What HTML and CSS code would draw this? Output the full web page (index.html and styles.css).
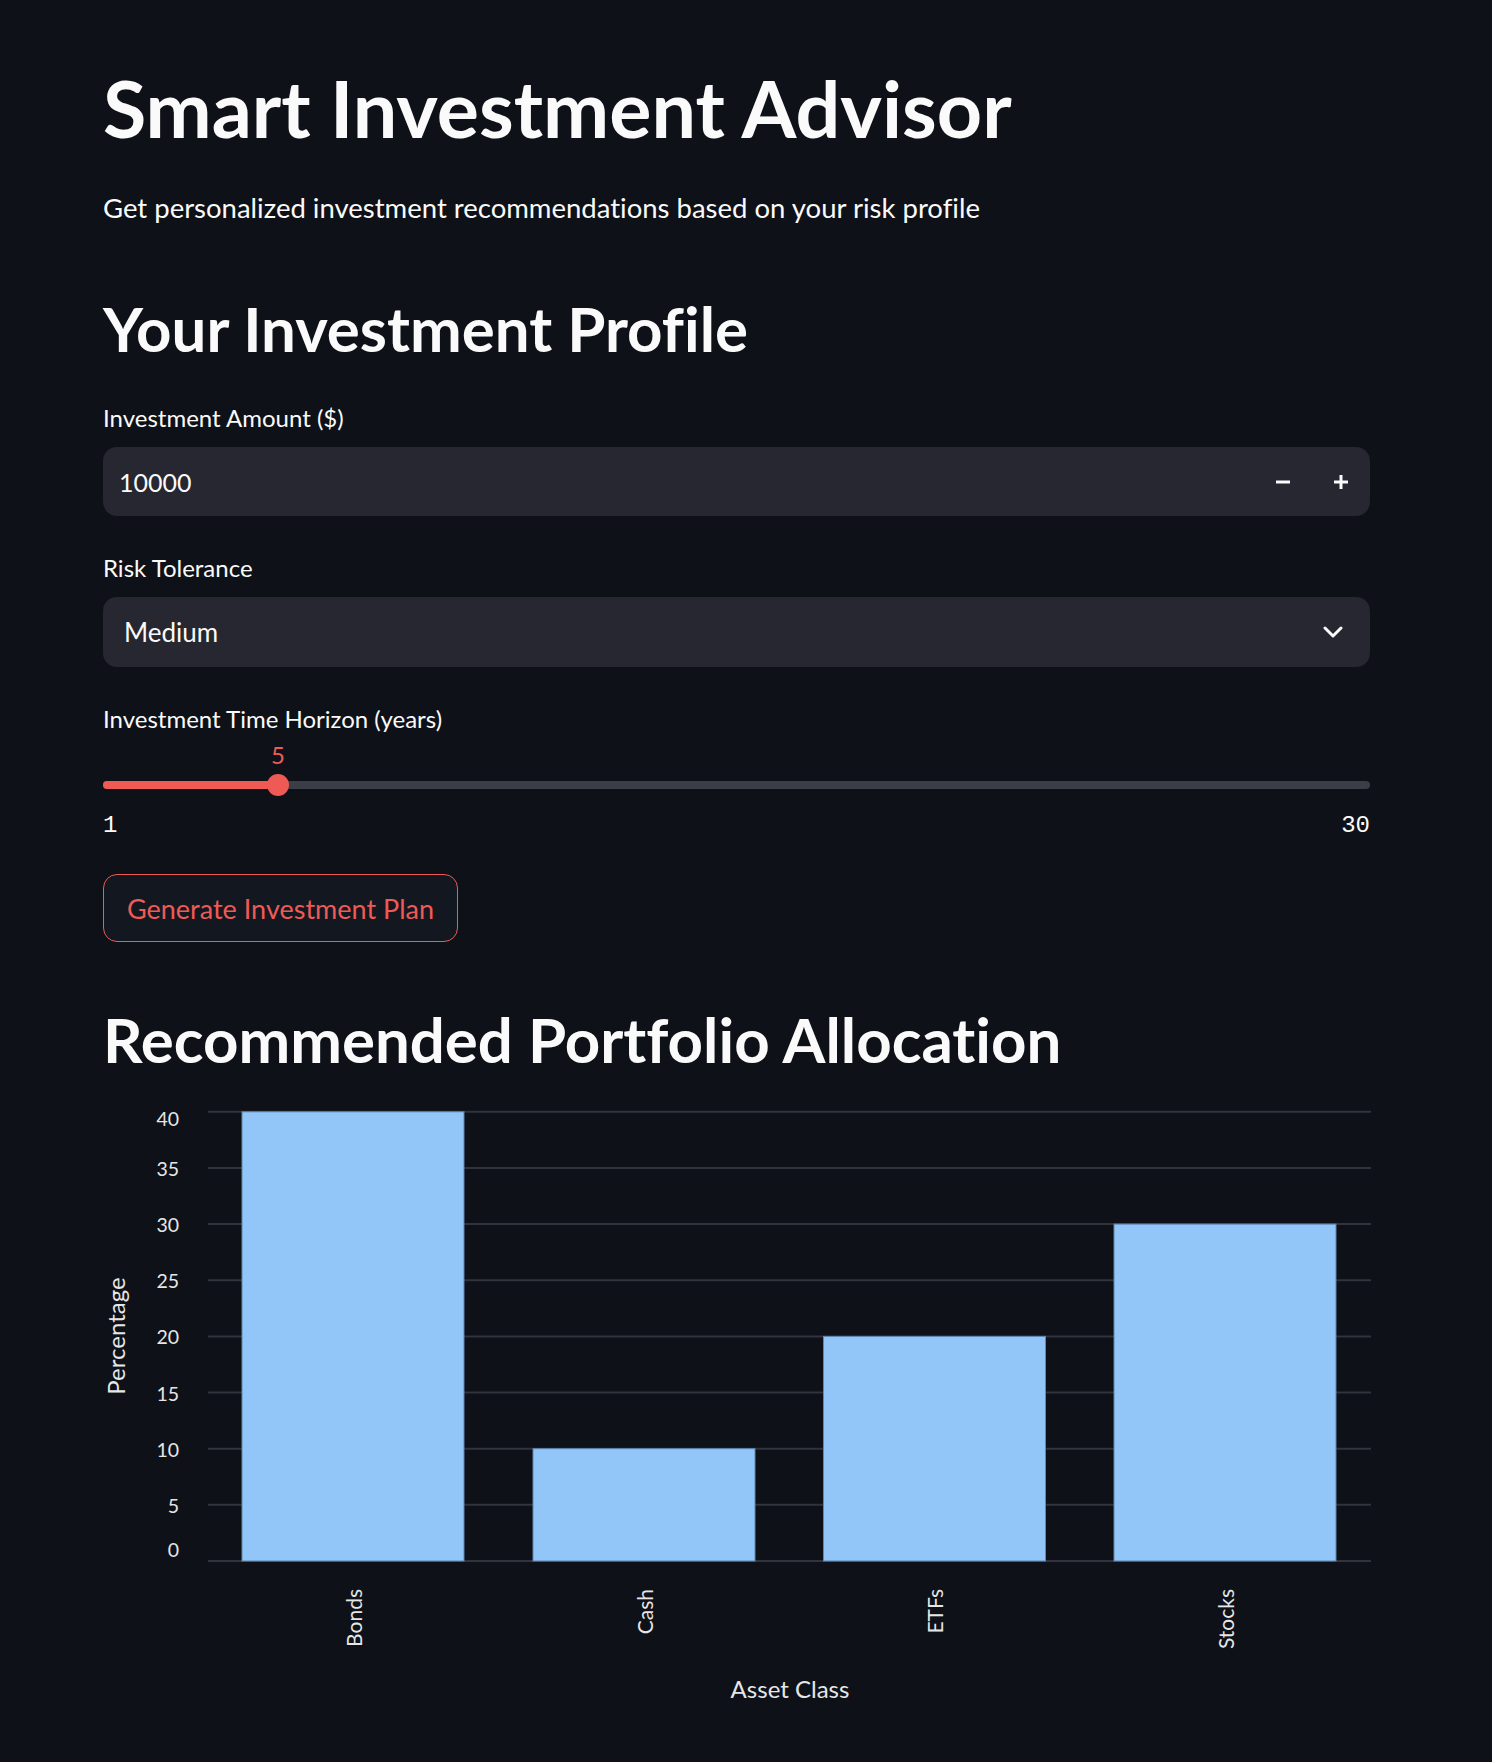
FILE: index.html
```html
<!DOCTYPE html>
<html lang="en">
<head>
<meta charset="utf-8">
<title>Smart Investment Advisor</title>
<link rel="stylesheet" href="styles.css">
</head>
<body>
<div class="main">
  <h1 class="title">Smart Investment Advisor</h1>
  <p class="lead">Get personalized investment recommendations based on your risk profile</p>

  <h2 class="section">Your Investment Profile</h2>

  <div class="field">
    <label class="label">Investment Amount ($)</label>
    <div class="box number">
      <span class="value num-value">10000</span>
      <div class="steps">
        <span class="step">
          <svg width="16" height="16" viewBox="0 0 16 16"><rect x="1" y="6.5" width="14" height="3" fill="#fafafa"/></svg>
        </span>
        <span class="step">
          <svg width="16" height="16" viewBox="0 0 16 16"><rect x="1" y="6.5" width="14" height="3" fill="#fafafa"/><rect x="6.5" y="1" width="3" height="14" fill="#fafafa"/></svg>
        </span>
      </div>
    </div>
  </div>

  <div class="field">
    <label class="label">Risk Tolerance</label>
    <div class="box select">
      <span class="value sel-value">Medium</span>
      <svg class="chev" width="20" height="12" viewBox="0 0 20 12"><polyline points="2,2 10,10 18,2" fill="none" stroke="#fafafa" stroke-width="3" stroke-linecap="round" stroke-linejoin="round"/></svg>
    </div>
  </div>

  <div class="field">
    <label class="label">Investment Time Horizon (years)</label>
    <div class="rail">
      <div class="track"></div>
      <div class="fill"></div>
      <div class="thumb"><span class="thumb-value">5</span></div>
    </div>
    <div class="ticks"><span>1</span><span>30</span></div>
  </div>

  <button class="btn">Generate Investment Plan</button>

  <h2 class="section section2">Recommended Portfolio Allocation</h2>

  <svg class="chart" width="1310" height="630" viewBox="0 0 1310 630">
    <g transform="translate(20 0)">
      <g class="grid">
        <line x1="105" x2="1268" y1="20.8" y2="20.8"/>
        <line x1="105" x2="1268" y1="76.95" y2="76.95"/>
        <line x1="105" x2="1268" y1="133.1" y2="133.1"/>
        <line x1="105" x2="1268" y1="189.25" y2="189.25"/>
        <line x1="105" x2="1268" y1="245.4" y2="245.4"/>
        <line x1="105" x2="1268" y1="301.55" y2="301.55"/>
        <line x1="105" x2="1268" y1="357.7" y2="357.7"/>
        <line x1="105" x2="1268" y1="413.85" y2="413.85"/>
        <line x1="105" x2="1268" y1="470" y2="470"/>
      </g>
      <g class="bars">
        <rect x="139" y="20.8" width="222" height="449.2"/>
        <rect x="430" y="357.7" width="222" height="112.3"/>
        <rect x="720.5" y="245.4" width="222" height="224.6"/>
        <rect x="1011" y="133.1" width="222" height="336.9"/>
      </g>
      <g class="ytick">
        <text x="76" y="35">40</text>
        <text x="76" y="85">35</text>
        <text x="76" y="141.1">30</text>
        <text x="76" y="197.3">25</text>
        <text x="76" y="253.4">20</text>
        <text x="76" y="309.5">15</text>
        <text x="76" y="365.7">10</text>
        <text x="76" y="421.9">5</text>
        <text x="76" y="466">0</text>
      </g>
      <g class="xtick">
        <text x="250.4" y="498" transform="rotate(-90 250.4 498)">Bonds</text>
        <text x="541.1" y="498" transform="rotate(-90 541.1 498)">Cash</text>
        <text x="831.9" y="498" transform="rotate(-90 831.9 498)">ETFs</text>
        <text x="1122.6" y="498" transform="rotate(-90 1122.6 498)">Stocks</text>
      </g>
      <text class="axis-title" x="12" y="245" transform="rotate(-90 12 245)">Percentage</text>
      <text class="axis-title" x="687" y="597">Asset Class</text>
    </g>
  </svg>
</div>
</body>
</html>
```
FILE: styles.css
```css
html, body {
  margin: 0;
  padding: 0;
  background: #0e1117;
}
body {
  color: #fafafa;
  font-family: Lato, "Open Sans", sans-serif;
  font-variant-ligatures: none;
  width: 1492px;
  min-height: 1762px;
}
.main {
  width: 1267px;
  padding: 60px 0 40px 103px;
}
.title {
  margin: 0;
  font-size: 79px;
  line-height: 95px;
  font-weight: 700;
}
.lead {
  margin: 33px 0 0;
  font-size: 27.5px;
  line-height: 40px;
}
.section {
  margin: 63px 0 0;
  font-size: 61.8px;
  line-height: 74px;
  font-weight: 700;
}
.section2 {
  margin-top: 60px;
}
.field {
  display: flex;
  flex-direction: column;
}
.label {
  display: block;
  margin-top: 35px;
  font-size: 24px;
  line-height: 36px;
}
.field + .field .label {
  margin-top: 34px;
}
.box {
  margin-top: 11px;
  background: #262730;
  border-radius: 14px;
  display: flex;
  align-items: center;
  box-sizing: border-box;
}
.number {
  height: 69px;
  padding-left: 16px;
}
.num-value {
  font-size: 25px;
  flex: 1;
}
.steps {
  display: flex;
}
.step {
  width: 58px;
  height: 69px;
  display: flex;
  align-items: center;
  justify-content: center;
}
.select {
  height: 70px;
  padding: 0 27px 0 21px;
}
.sel-value {
  font-size: 26px;
  flex: 1;
}
.rail {
  position: relative;
  height: 22px;
  margin-top: 37px;
}
.track {
  position: absolute;
  left: 0;
  right: 0;
  top: 7px;
  height: 8px;
  border-radius: 4px;
  background: #3b3e46;
}
.fill {
  position: absolute;
  left: 0;
  top: 7px;
  height: 8px;
  width: 175px;
  border-radius: 4px;
  background: #ef5a55;
}
.thumb {
  position: absolute;
  left: 164px;
  top: 0;
  width: 22px;
  height: 22px;
  border-radius: 50%;
  background: #ef5a55;
}
.thumb-value {
  position: absolute;
  bottom: calc(100% + 4px);
  left: 50%;
  transform: translateX(-50%);
  font-size: 24px;
  line-height: 30px;
  color: #ef5a55;
}
.ticks {
  display: flex;
  justify-content: space-between;
  height: 60px;
  line-height: 60px;
  font-family: "Liberation Mono", "DejaVu Sans Mono", monospace;
  font-size: 24px;
}
.btn {
  margin-top: 18px;
  width: 355px;
  height: 68px;
  border: 1px solid #ef5a55;
  border-radius: 14px;
  background: #131720;
  color: #ef5a55;
  font-family: Lato, "Open Sans", sans-serif;
  font-variant-ligatures: none;
  font-size: 27px;
  display: flex;
  align-items: center;
  justify-content: center;
  padding: 0;
}
.chart {
  display: block;
  margin: 15px 0 0 -20px;
}
.grid line {
  stroke: #31333f;
  stroke-width: 2;
}
.bars rect {
  fill: #92c6f8;
  stroke: #5f86ad;
  stroke-width: 1;
}
.ytick text {
  fill: #e6e6e8;
  font-family: Lato, sans-serif;
  font-size: 19.5px;
  text-anchor: end;
}
.xtick text {
  fill: #e6e6e8;
  font-family: Lato, sans-serif;
  font-size: 21px;
  text-anchor: end;
  dominant-baseline: central;
}
.axis-title {
  fill: #e6e6e8;
  font-family: Lato, sans-serif;
  font-size: 24px;
  text-anchor: middle;
  dominant-baseline: central;
}
```
